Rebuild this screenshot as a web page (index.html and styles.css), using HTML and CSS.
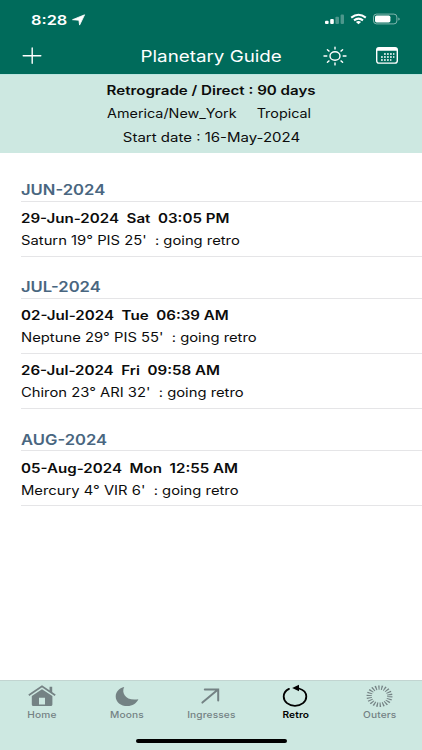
FILE: index.html
```html
<!DOCTYPE html>
<html lang="en">
<head>
<meta charset="utf-8">
<title>Planetary Guide</title>
<link rel="stylesheet" href="styles.css">
</head>
<body>
<div class="app">
  <header class="top">
    <div class="status">
      <span class="time"><span class="t">8:28</span></span>
      <svg class="loc" width="14" height="12" viewBox="0 0 14 12"><path d="M12.6 .8 7.6 11.1 6.9 6.2.5 5.7Z" fill="#fff" stroke="#fff" stroke-width=".8" stroke-linejoin="round"/></svg>
      <svg class="signals" width="78" height="14" viewBox="0 0 78 14">
        <g fill="#fff"><rect x="1" y="7.7" width="3.6" height="3.3" rx="1"/><rect x="6.2" y="6" width="3.6" height="5" rx="1"/><rect x="11.4" y="3.8" width="3.6" height="7.2" rx="1" opacity=".3"/><rect x="16.6" y="1.6" width="3.4" height="9.4" rx="1" opacity=".3"/></g>
        <g fill="none" stroke="#fff" stroke-width="2"><path d="M27.2 4.6Q34.5-1.2 41.8 4.6"/><path d="M30 7.4Q34.5 3.8 39 7.4"/></g>
        <path d="M31.9 8.9Q34.5 7.2 37.1 8.9L34.5 11.2Z" fill="#fff"/>
        <rect x="49.5" y="1.1" width="23.4" height="9.8" rx="3" fill="none" stroke="#fff" stroke-opacity=".5"/>
        <rect x="51" y="2.6" width="15.4" height="6.8" rx="1.6" fill="#fff"/>
        <path d="M74.3 4.4Q77.2 6 74.3 7.6Z" fill="#fff" opacity=".5"/>
      </svg>
    </div>
    <div class="nav">
      <svg class="plus" width="20" height="18" viewBox="0 0 20 18"><path d="M1.2 8.7H18.8M10.2 1V16.3" stroke="#fff" stroke-width="1.4" stroke-linecap="round"/></svg>
      <h1><span class="t">Planetary Guide</span></h1>
      <svg class="sun" width="26" height="20" viewBox="0 0 26 20"><g fill="none" stroke="#fff" stroke-width="1.4" stroke-linecap="round"><ellipse cx="13" cy="10" rx="5" ry="4.2"/><path d="M13 1.1V3M13 17V18.9M2 10H4.8M21.2 10H24M5.4 3.8 7 5.1M19 14.9 20.6 16.2M5.4 16.2 7 14.9M19 5.1 20.6 3.8"/></g></svg>
      <svg class="cal" width="24" height="19" viewBox="0 0 24 19"><rect x="1.7" y="1.7" width="20.6" height="15.4" rx="2.4" fill="none" stroke="#fff" stroke-width="1.4"/><path d="M1.5 4.8V3.8Q1.5 1.5 4 1.5H20Q22.5 1.5 22.5 3.8V4.8Z" fill="#fff"/><g stroke="#fff" stroke-width="1.5" stroke-dasharray="1.8 1.2"><path d="M9 8.1H19.4"/><path d="M6 11.1H19.4"/><path d="M6 14.1H16.4"/></g></svg>
    </div>
  </header>
  <section class="info">
    <p class="strong"><span class="t">Retrograde / Direct : 90 days</span></p>
    <p class="zone"><span class="t">America/New_York</span><span class="t">Tropical</span></p>
    <p><span class="t">Start date : 16-May-2024</span></p>
  </section>
  <main class="list">
    <h2 class="first"><span class="t">JUN-2024</span></h2>
    <article><h3><span class="t">29-Jun-2024&nbsp; Sat&nbsp; 03:05 PM</span></h3><p><span class="t">Saturn 19° PIS 25'&nbsp; : going retro</span></p></article>
    <h2><span class="t">JUL-2024</span></h2>
    <article><h3><span class="t">02-Jul-2024&nbsp; Tue&nbsp; 06:39 AM</span></h3><p><span class="t">Neptune 29° PIS 55'&nbsp; : going retro</span></p></article>
    <article><h3><span class="t">26-Jul-2024&nbsp; Fri&nbsp; 09:58 AM</span></h3><p><span class="t">Chiron 23° ARI 32'&nbsp; : going retro</span></p></article>
    <h2 class="last"><span class="t">AUG-2024</span></h2>
    <article><h3><span class="t">05-Aug-2024&nbsp; Mon&nbsp; 12:55 AM</span></h3><p><span class="t">Mercury 4° VIR 6'&nbsp; : going retro</span></p></article>
  </main>
  <footer class="bottom">
    <nav class="tabs">
      <a><svg width="30" height="24" viewBox="0 0 30 24"><path d="M1.8 11.2 15 2.3 28.2 11.2M23.8 3.4V8" fill="none" stroke="#748284" stroke-width="1.8"/><path d="M22.6 2.8H25.2V9L22.6 7.2Z" fill="#748284"/><path fill-rule="evenodd" d="M4.8 12 15 5.2 25.4 12V20.4Q25.4 22 23.8 22H6.4Q4.8 22 4.8 20.4ZM12 13.7V20.4H18V13.7Z" fill="#748284"/></svg><span class="t">Home</span></a>
      <a><svg width="30" height="24" viewBox="0 0 30 24"><path d="M12.2 2.9C9 8.8 14 17.6 26.4 15.2C24.5 19.4 20.4 22 15.4 22C8.7 22 3.7 18 3.7 12.4C3.7 7.8 7.1 4 12.2 2.9Z" fill="#748284"/></svg><span class="t">Moons</span></a>
      <a><svg width="30" height="24" viewBox="0 0 30 24"><path d="M6.4 18.6 22 5.6M8.8 5.6H22.2V16.6" fill="none" stroke="#748284" stroke-width="2" stroke-linecap="round"/></svg><span class="t">Ingresses</span></a>
      <a class="on"><svg width="30" height="24" viewBox="0 0 30 24"><path d="M19 4.5C24 5.9 26.3 9 26.3 12.6C26.3 17.7 21.3 21.8 15 21.8S3.7 17.7 3.7 12.6C3.7 8.8 5.8 6.5 9 4.9" fill="none" stroke="#000" stroke-width="1.8" stroke-linecap="round"/><path d="M12.2 3.9 19 .8V7.2Z" fill="#000"/></svg><span class="t">Retro</span></a>
      <a><svg width="30" height="24" viewBox="0 0 30 24"><g transform="translate(14.5 12.2) scale(1.2 1)" fill="none" stroke="#748284"><circle r="8.6" stroke-width="4.4" stroke-dasharray="1.05 1.406"/></g></svg><span class="t">Outers</span></a>
    </nav>
    <div class="homebar"></div>
  </footer>
</div>
</body>
</html>
```
FILE: styles.css
```css
* { box-sizing: border-box; margin: 0; padding: 0; }
body { font-family: Inter, "Liberation Sans", sans-serif; font-size: 12.6px; color: #0c0c0c; background: #fff; }
h1, h2, h3 { font-weight: inherit; font-size: inherit; }
svg { display: block; flex: none; }
.app { width: 422px; height: 750px; display: flex; flex-direction: column; overflow: hidden; }
.t { display: inline-block; white-space: nowrap; transform: scaleX(1.174); transform-origin: 50% 50%; }

.top { height: 74px; background: #006b5b; color: #fff; flex: none; }
.status { height: 38px; display: flex; align-items: center; padding: 1px 20px 0 31px; }
.time { font-size: 13.5px; font-weight: 600; width: 41px; }
.time .t { transform-origin: 0 50%; transform: scaleX(1.21); }
.signals { margin: 1px 0 0 auto; }
.nav { height: 36px; display: grid; grid-template-columns: 58px 1fr 54px 50px; align-items: center; padding: 0 10px 1px 12px; }
.nav svg { justify-self: center; }
.nav .plus { justify-self: start; margin-left: 10px; }
h1 { font-size: 16px; text-align: center; padding-left: 44px; }
.info { height: 79px; flex: none; background: #cde8e1; text-align: center; padding-top: 4px; border-top: 1px solid #bce5df; }
.info p { height: 24px; line-height: 24px; }
.info p .t { transform: scaleX(1.19); }
.info .strong { height: 23px; font-weight: 600; }
.info .strong .t { transform: scaleX(1.2); }
.info .zone { display: flex; justify-content: center; gap: 32px; line-height: 23px; padding-left: 1px; }
.info .zone .t { transform: scaleX(1.14); }

.list { flex: 1; padding-left: 21px; }
.list .t { transform-origin: 0 50%; }
h2 { height: 42px; padding-top: 20px; line-height: 20px; font-size: 14.5px; font-weight: 600; color: #496680; border-bottom: 1px solid #e5e5e7; }
h2 .t { transform: scaleX(1.145); }
h2.first { height: 49px; padding-top: 27px; }
h2.last { padding-top: 21px; }
article { height: 55px; padding-top: 6px; border-bottom: 1px solid #e5e5e7; }
article h3, article p { height: 22px; line-height: 22px; }
h2.last + article { padding-top: 7px; }
article h3 { font-weight: 600; }
article h3 .t { transform: scaleX(1.2); }

.bottom { height: 70px; flex: none; background: #cde8e1; border-top: 1px solid #c2d5d1; display: flex; flex-direction: column; align-items: center; }
.tabs { width: 100%; height: 57px; display: grid; grid-template-columns: repeat(5, 1fr); padding-top: 3px; }
.tabs a { display: flex; flex-direction: column; align-items: center; font-size: 9px; line-height: 14px; font-weight: 500; color: #748284; }
.tabs .t { letter-spacing: .1px; transform: scaleX(1.13); }
.tabs .on { color: #000; font-weight: 600; }
.homebar { width: 151px; height: 4px; border-radius: 2px; background: #000; margin-top: 1px; }
```
